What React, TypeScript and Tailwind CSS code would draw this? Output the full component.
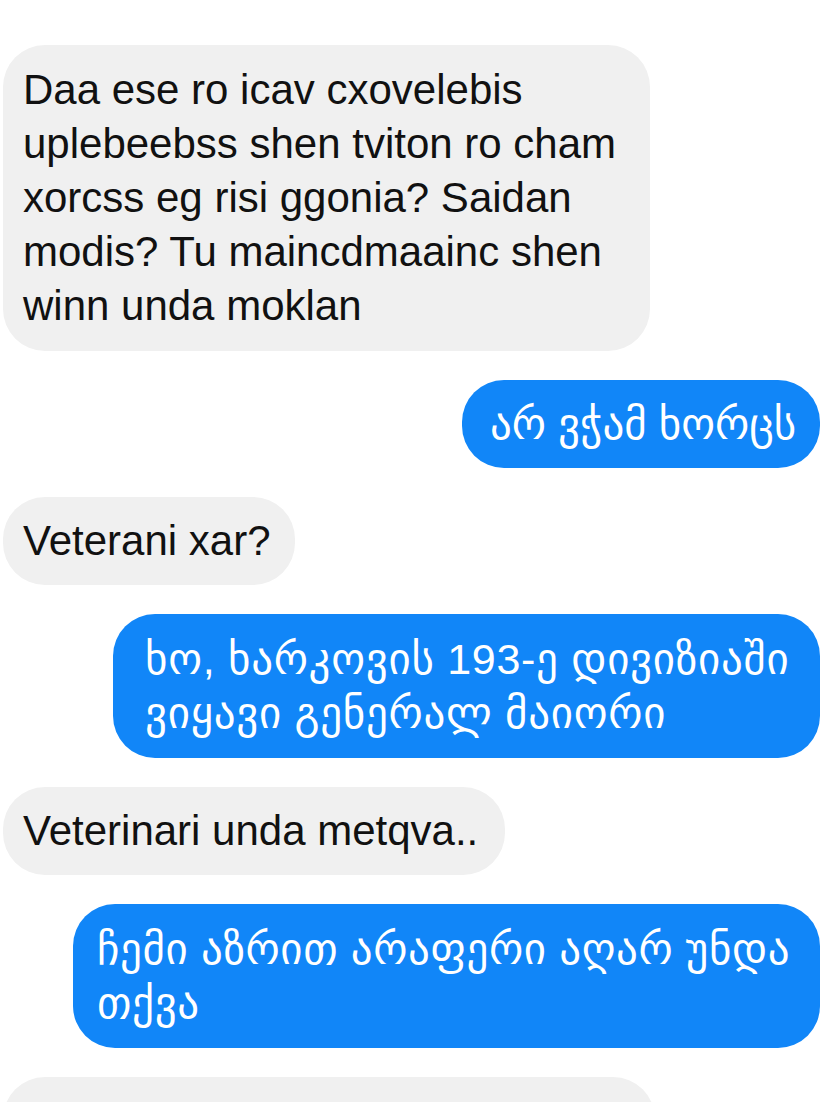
import { FC, ReactNode } from 'react';

interface BubbleProps {
  side: 'left' | 'right';
  className?: string;
  children: ReactNode;
}

const Bubble: FC<BubbleProps> = ({ side, className, children }) => {
  const mine = side === 'right';
  return (
    <div className={mine ? 'flex justify-end pr-2' : 'flex justify-start pl-[3px]'}>
      <div
        className={`rounded-[42px] leading-[54px] whitespace-nowrap ${
          mine
            ? 'bg-[#1186f8] text-[43px] text-white'
            : 'bg-[#f0f0f0] text-[42px] text-[#111111]'
        } ${className ?? ''}`}>
        {children}
      </div>
    </div>
  );
};

const App: FC = () => {
  return (
    <div
      className="h-[1102px] w-[828px] overflow-hidden bg-white pt-[45px]"
      style={{ fontFamily: '"Liberation Sans", "DejaVu Sans", sans-serif' }}>
      <div className="flex flex-col gap-[29px]">
        <Bubble side="left" className="w-[647px] px-5 py-[18px]">
          Daa ese ro icav cxovelebis
          <br />
          uplebeebss shen tviton ro cham
          <br />
          xorcss eg risi ggonia? Saidan
          <br />
          modis? Tu maincdmaainc shen
          <br />
          winn unda moklan
        </Bubble>

        <Bubble side="right" className="w-[358px] px-7 py-[17px]">
          არ ვჭამ ხორცს
        </Bubble>

        <Bubble side="left" className="w-[292px] px-5 py-[17px]">
          Veterani xar?
        </Bubble>

        <Bubble side="right" className="w-[707px] px-8 py-[18px] tracking-[0.7px]">
          ხო, ხარკოვის 193-ე დივიზიაში
          <br />
          ვიყავი გენერალ მაიორი
        </Bubble>

        <Bubble side="left" className="w-[502px] px-5 py-[17px]">
          Veterinari unda metqva..
        </Bubble>

        <Bubble side="right" className="w-[747px] px-6 py-[18px] tracking-[0.6px]">
          ჩემი აზრით არაფერი აღარ უნდა
          <br />
          თქვა
        </Bubble>

        <Bubble side="left" className="h-[120px] w-[652px] px-5">
          {''}
        </Bubble>
      </div>
    </div>
  );
};

export default App;
